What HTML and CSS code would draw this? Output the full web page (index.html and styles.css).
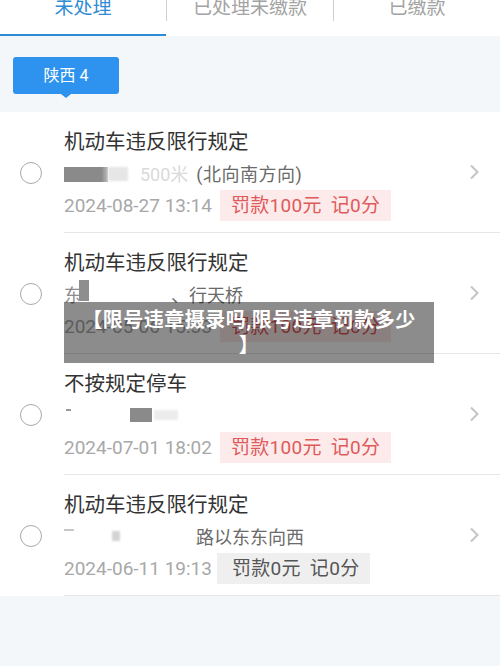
FILE: index.html
```html
<!DOCTYPE html>
<html lang="zh-CN">
<head>
<meta charset="utf-8">
<title>违章查询</title>
<link rel="stylesheet" href="styles.css">
</head>
<body>
<div class="page">
  <nav class="tabs">
    <div class="tab active"><span class="tab-label">未处理</span></div>
    <div class="sep"></div>
    <div class="tab"><span class="tab-label">已处理未缴款</span></div>
    <div class="sep"></div>
    <div class="tab"><span class="tab-label">已缴款</span></div>
  </nav>

  <div class="filter">
    <div class="badge">陕西 4</div>
  </div>

  <ul class="list">
    <li class="row">
      <span class="radio"></span>
      <div class="main">
        <div class="info">
          <div class="title">机动车违反限行规定</div>
          <div class="addr"><span class="blot r1a"></span><span class="blot r1b"></span><span class="faint r1c">500米</span><span class="dir">(北向南方向)</span></div>
          <div class="meta"><span class="date">2024-08-27 13:14</span><span class="tag">罚款100元<span class="pts">记0分</span></span></div>
        </div>
        <svg class="chev" viewBox="0 0 10 16" width="10" height="16"><path d="M2 1.5 L8.5 8 L2 14.5" fill="none" stroke="#c4c4c4" stroke-width="2"/></svg>
      </div>
    </li>
    <li class="row">
      <span class="radio"></span>
      <div class="main">
        <div class="info">
          <div class="title">机动车违反限行规定</div>
          <div class="addr"><span class="partial">东</span><span class="blot r2a"></span><span class="space r2b"></span>、行天桥</div>
          <div class="meta"><span class="date">2024-05-06 15:33</span><span class="tag">罚款100元<span class="pts">记0分</span></span></div>
        </div>
        <svg class="chev" viewBox="0 0 10 16" width="10" height="16"><path d="M2 1.5 L8.5 8 L2 14.5" fill="none" stroke="#c4c4c4" stroke-width="2"/></svg>
      </div>
    </li>
    <li class="row">
      <span class="radio"></span>
      <div class="main">
        <div class="info">
          <div class="title">不按规定停车</div>
          <div class="addr"><span class="tick r3a"></span><span class="blot r3b"></span><span class="blot r3c"></span></div>
          <div class="meta"><span class="date">2024-07-01 18:02</span><span class="tag">罚款100元<span class="pts">记0分</span></span></div>
        </div>
        <svg class="chev" viewBox="0 0 10 16" width="10" height="16"><path d="M2 1.5 L8.5 8 L2 14.5" fill="none" stroke="#c4c4c4" stroke-width="2"/></svg>
      </div>
    </li>
    <li class="row">
      <span class="radio"></span>
      <div class="main">
        <div class="info">
          <div class="title">机动车违反限行规定</div>
          <div class="addr"><span class="tick r4a"></span><span class="blot r4b"></span><span class="space r4c"></span>路以东东向西</div>
          <div class="meta"><span class="date">2024-06-11 19:13</span><span class="tag plain">罚款0元<span class="pts">记0分</span></span></div>
        </div>
        <svg class="chev" viewBox="0 0 10 16" width="10" height="16"><path d="M2 1.5 L8.5 8 L2 14.5" fill="none" stroke="#c4c4c4" stroke-width="2"/></svg>
      </div>
    </li>
  </ul>

  <div class="overlay">【限号违章摄录吗,限号违章罚款多少】</div>
</div>
</body>
</html>
```
FILE: styles.css
```css
* { box-sizing: border-box; }
html, body { margin: 0; padding: 0; }
body {
  background: #f4f7f9;
  font-family: Roboto, "Noto Sans CJK SC", sans-serif;
  color: #333;
}
.page { position: relative; width: 500px; height: 666px; overflow: hidden; }

.tabs {
  display: flex;
  height: 36px;
  background: #fff;
}
.tab {
  flex: 1;
  display: flex;
  justify-content: center;
  align-items: flex-start;
  color: #a3a3a3;
  font-size: 19px;
}
.tab.active { color: #2f8bd2; border-bottom: 2px solid #2f8bd2; }
.tab-label { line-height: 20px; margin-top: -2px; }
.sep { width: 1px; height: 21px; background: #cfcfcf; }

.filter { padding: 21px 13px 18px; background: #f4f7f9; }
.badge {
  position: relative;
  width: 106px;
  height: 37px;
  line-height: 37px;
  text-align: center;
  color: #fff;
  font-size: 16px;
  background: #2d93ee;
  border-radius: 3px;
}
.badge::after {
  content: "";
  position: absolute;
  left: 48px;
  bottom: -4px;
  border-left: 5px solid transparent;
  border-right: 5px solid transparent;
  border-top: 4px solid #2d93ee;
}

.list { list-style: none; margin: 0; padding: 0; background: #fff; }
.row { display: flex; align-items: stretch; }
.radio {
  align-self: center;
  width: 22px;
  height: 22px;
  margin: 0 22px 0 20px;
  border: 1.5px solid #a9a9a9;
  border-radius: 50%;
  flex-shrink: 0;
}
.main {
  flex: 1;
  display: flex;
  align-items: center;
  border-bottom: 1px solid #e6e6e6;
}
.info { flex: 1; padding: 15px 0 11px; }
.chev { margin-right: 21px; flex-shrink: 0; }

.title { font-size: 20.5px; line-height: 30px; height: 30px; color: #333; white-space: nowrap; }
.addr {
  display: flex;
  align-items: center;
  height: 31px;
  font-size: 18px;
  color: #6a6a6a;
  white-space: nowrap;
}
.dir { margin-left: 8px; letter-spacing: 0.5px; }
.blot { display: inline-block; flex-shrink: 0; }
.r1a { width: 44px; height: 15px; background: linear-gradient(90deg, #8a8a8a 85%, #bdbdbd); margin-top: 3px; filter: blur(0.6px); }
.r1b { width: 20px; height: 14px; background: #e6e6e6; margin-top: 3px; filter: blur(0.8px); }
.faint { color: #dadada; }
.r1c { margin-left: 12px; }
.partial { color: #8d8d8d; width: 15px; overflow: hidden; display: inline-block; }
.r2a { width: 10px; height: 21px; background: #8e8e8e; margin-top: -6px; filter: blur(0.5px); }
.space { display: inline-block; flex-shrink: 0; }
.r2b { width: 82px; }
.tick { display: inline-block; flex-shrink: 0; height: 2px; background: #9a9a9a; }
.r3a { width: 5px; margin: -10px 0 0 2px; }
.r3b { width: 22px; height: 14px; background: #8a8a8a; margin-left: 59px; filter: blur(0.6px); }
.r3c { width: 24px; height: 10px; background: #ececec; margin-left: 2px; filter: blur(1px); }
.r4a { width: 10px; margin: -12px 0 0 0; background: #c8c8c8; }
.r4b { width: 8px; height: 10px; background: #d4d4d4; margin-left: 38px; filter: blur(0.8px); }
.r4c { width: 76px; }

.meta { display: flex; align-items: center; height: 31px; margin-top: 2px; white-space: nowrap; }
.date { font-size: 19px; color: #a8a8a8; }
.tag {
  margin-left: 8px;
  height: 31px;
  line-height: 31px;
  padding: 0 11px;
  font-size: 19px;
  color: #de5a5c;
  background: #fdeaea;
  letter-spacing: 0.3px;
}
.pts { margin-left: 9px; }
.tag.plain { color: #555; background: #efefef; padding: 0 11px 0 15px; margin-left: 5px; }

.overlay {
  position: absolute;
  left: 64px;
  top: 302px;
  width: 370px;
  height: 61px;
  padding: 6px 14px 0;
  background: rgba(0, 0, 0, 0.45);
  color: #fff;
  font-weight: bold;
  font-size: 20px;
  line-height: 25px;
  letter-spacing: 0.5px;
  text-align: center;
  line-break: anywhere;
  word-break: break-all;
}
```
